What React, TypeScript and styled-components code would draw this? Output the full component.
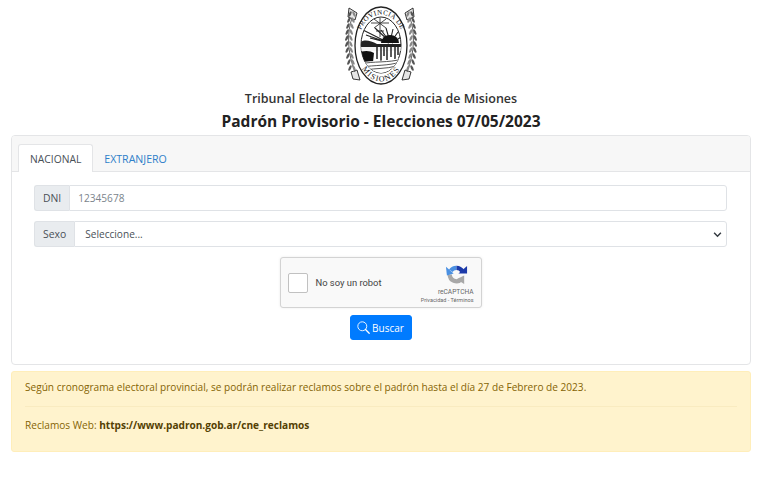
import React from 'react';
import styled, { createGlobalStyle } from 'styled-components';

const Global = createGlobalStyle`
  html, body { margin: 0; padding: 0; background: #fff; }
  body { font-family: "Open Sans", "Noto Sans", sans-serif; color: #212529; }
`;
const Page = styled.div`
  width: 740px;
  margin-left: 11px;
  display: flex;
  flex-direction: column;
  align-items: stretch;
`;
const Header = styled.header`
  display: flex;
  flex-direction: column;
  align-items: center;
  height: 135px;
`;
const Emblem = styled.svg`
  width: 76px;
  height: 90px;
  display: block;
`;
const Subtitle = styled.div`
  font-size: 12.5px;
  line-height: 17px;
  font-weight: 600;
  color: #333;
`;
const Title = styled.h1`
  font-size: 15.5px;
  line-height: 20px;
  font-weight: 700;
  color: #222;
  margin: 4px 0 0;
`;
const Card = styled.section`
  height: 230px;
  box-sizing: border-box;
  border: 1px solid #e4e5e7;
  border-radius: 4px;
  background: #fff;
  display: flex;
  flex-direction: column;
`;
const Tabs = styled.nav`
  height: 36px;
  box-sizing: border-box;
  background: #f7f7f7;
  border-bottom: 1px solid #e4e5e7;
  padding: 9px 6px 0;
  display: flex;
  align-items: flex-end;
  border-radius: 3px 3px 0 0;
`;
const Tab = styled.div<{ $active?: boolean }>`
  height: ${p => (p.$active ? '28px' : '27px')};
  box-sizing: border-box;
  padding: 0 ${p => (p.$active ? '11px' : '10px')};
  display: flex;
  align-items: center;
  font-size: ${p => (p.$active ? '10.3px' : '10.6px')};
  color: ${p => (p.$active ? '#495057' : '#2f7fc9')};
  background: ${p => (p.$active ? '#fff' : 'transparent')};
  border: 1px solid ${p => (p.$active ? '#e4e5e7' : 'transparent')};
  border-bottom: none;
  border-radius: 3px 3px 0 0;
  margin-bottom: -1px;
`;
const Body = styled.div`
  padding: 13px 23px 0 22px;
  display: flex;
  flex-direction: column;
  align-items: stretch;
`;
const Group = styled.div`
  display: flex;
  height: 26px;
  margin-bottom: 10px;
`;
const Addon = styled.div`
  box-sizing: border-box;
  padding: 0 8px;
  display: flex;
  align-items: center;
  font-size: 10.4px;
  color: #495057;
  background: #e9ecef;
  border: 1px solid #dfe2e6;
  border-right: none;
  border-radius: 3px 0 0 3px;
`;
const Field = styled.div<{ $muted?: boolean }>`
  flex: 1;
  box-sizing: border-box;
  padding: 0 8px;
  display: flex;
  align-items: center;
  justify-content: space-between;
  font-size: 10.1px;
  color: ${p => (p.$muted ? '#7b848c' : '#495057')};
  border: 1px solid #dfe2e6;
  border-radius: 0 3px 3px 0;
  background: #fff;
`;
const Select = styled(Field)`
  padding: 0 4px 0 10px;
`;
const Captcha = styled.div`
  align-self: center;
  width: 202px;
  height: 51px;
  box-sizing: border-box;
  background: #f9f9f9;
  border: 1px solid #d3d3d3;
  border-radius: 3px;
  box-shadow: 0 0 3px rgba(0, 0, 0, 0.08);
  display: flex;
  align-items: center;
  padding: 0 7px 0 7px;
`;
const Check = styled.div`
  width: 20px;
  height: 20px;
  box-sizing: border-box;
  background: #fff;
  border: 1px solid #c1c1c1;
  border-radius: 2px;
`;
const CaptchaLabel = styled.div`
  font-family: Roboto, "Liberation Sans", sans-serif;
  font-size: 9.4px;
  color: #444;
  margin-left: 8px;
  flex: 1;
`;
const Brand = styled.div`
  display: flex;
  flex-direction: column;
  align-items: center;
  font-family: Roboto, "Liberation Sans", sans-serif;
  color: #666;
  margin-top: 2px;
`;
const BrandMark = styled.svg`
  width: 23px;
  height: 23px;
  align-self: flex-end;
  margin-right: 6px;
  display: block;
`;
const BrandName = styled.div`
  font-size: 6.6px;
  line-height: 8px;
  margin-top: 2px;
  align-self: flex-end;
`;
const BrandLinks = styled.div`
  font-size: 5.5px;
  line-height: 7px;
  margin-top: 1px;
`;
const SearchButton = styled.button`
  align-self: center;
  margin-top: 7px;
  width: 62px;
  height: 25px;
  padding: 0;
  display: flex;
  align-items: center;
  justify-content: center;
  gap: 2px;
  font-family: inherit;
  font-size: 10px;
  color: #fff;
  background: #007bff;
  border: 1px solid #007bff;
  border-radius: 3px;
`;
const Alert = styled.aside`
  margin-top: 6px;
  height: 81px;
  box-sizing: border-box;
  background: #fff3cd;
  border: 1px solid #ffeeba;
  border-radius: 3px;
  padding: 8px 13px 0;
  color: #856404;
  font-size: 10.1px;
`;
const AlertLine = styled.p`
  margin: 0;
  line-height: 15px;
`;
const Rule = styled.hr`
  border: none;
  border-top: 1px solid #f9ebc0;
  margin: 11px 0 11px;
`;
const Strong = styled.b`
  color: #533f03;
  font-weight: 700;
`;

const leafRows = [14, 20, 26, 32, 38, 44, 50, 56, 62, 68];

const Wreath = () => (
  <g>
    <path d="M6 8 L14 13 L12 20 L5 17 Z" fill="#e6e6e6" stroke="#222" strokeWidth="0.9" />
    <path d="M8 72 L14 70 L17 80 L10 79 Z" fill="#e6e6e6" stroke="#222" strokeWidth="0.9" />
    <path d="M9 18 C4 32 4 52 12 72" fill="none" stroke="#333" strokeWidth="0.8" />
    {leafRows.map(y => {
      const x = 9 - 3.2 * Math.sin(((y - 14) / 54) * Math.PI);
      return (
        <g key={y}>
          <ellipse cx={x - 2} cy={y} rx="1.2" ry="3" transform={`rotate(25 ${x - 2} ${y})`} fill="#555" />
          <ellipse cx={x + 2} cy={y} rx="1.2" ry="3" transform={`rotate(-25 ${x + 2} ${y})`} fill="#888" />
        </g>
      );
    })}
  </g>
);

const Seal = () => (
  <Emblem viewBox="0 0 76 90">
    <defs>
      <path id="sealTop" d="M15 45 A23 30.500 0 0 1 61 45" />
      <path id="sealBottom" d="M13 45 A25 36.500 0 0 0 63 45" />
      <clipPath id="sealInner"><ellipse cx="38" cy="45" rx="20" ry="28" /></clipPath>
    </defs>
    <Wreath />
    <g transform="matrix(-1 0 0 1 76 0)"><Wreath /></g>
    <ellipse cx="38" cy="45.500" rx="26" ry="38.500" fill="#fff" stroke="#222" strokeWidth="1.300" />
    <ellipse cx="38" cy="45" rx="20" ry="28" fill="#fff" stroke="#222" strokeWidth="1" />
    <g clipPath="url(#sealInner)">
      <path d="M37 18v19M28 23h18M31 19l12 9M43 19L31 28M33 31h8" stroke="#333" strokeWidth="0.9" />
      <path d="M20 30L46 43M23 35L46 43M27 38L46 43M32 28L47 42M38 30L47 42M43 28L47 42M50 29L47 42M55 32L48 42M58 37L49 43" stroke="#222" strokeWidth="1.100" />
      <path d="M38 43 a9 8 0 0 1 18 0Z" fill="#111" />
      <path d="M18 42 C22 39 28 41 34 44 L60 44 V47 H18Z" fill="#222" />
      <path d="M18 47 H58 V51 H18Z" fill="#f4f4f4" />
      <path d="M17 52 C23 50 28 51 31 53 L30 62 L17 63Z" fill="#111" />
      <path d="M34 46 V59M38 46 V62M41 46 V56M44 46 V60M48 46 V57M52 46 V59M55 46 V55" stroke="#222" strokeWidth="1.500" />
      <path d="M17 63 C28 60 45 62 60 57 V75 H17Z" fill="#fff" />
      <path d="M17 64 C30 61 46 63 59 59M20 67 C30 65 46 66 57 62M23 70 C32 68 44 69 53 66" stroke="#444" strokeWidth="0.9" fill="none" />
    </g>
    <text fontFamily="'Liberation Serif', serif" fontSize="7" fill="#111" textAnchor="middle" letterSpacing="0.4">
      <textPath href="#sealTop" startOffset="50%">PROVINCIA DE</textPath>
    </text>
    <text fontFamily="'Liberation Serif', serif" fontSize="8" fill="#111" textAnchor="middle" letterSpacing="1.300">
      <textPath href="#sealBottom" startOffset="50%">MISIONES</textPath>
    </text>
  </Emblem>
);

const RecaptchaLogo = () => (
  <BrandMark viewBox="0 0 24 24" fill="none">
    <path d="M5 12 A7 7 0 0 0 17 17" stroke="#a8a8a8" strokeWidth="4.500" />
    <path d="M12 17 L20 13 L20 22 Z" fill="#a8a8a8" />
    <path d="M6 8 A7 7 0 0 1 12 5" stroke="#4a90e2" strokeWidth="4.500" />
    <path d="M1 4 L9 11 L2 13 Z" fill="#4a90e2" />
    <path d="M12 5 A7 7 0 0 1 18 8.500" stroke="#1c3aa9" strokeWidth="4.500" />
    <path d="M14 11 L23 11 L23 3 Z" fill="#1c3aa9" />
  </BrandMark>
);

const SearchIcon = () => (
  <svg width="13" height="13" viewBox="0 0 16 16" fill="none" stroke="#fff" strokeWidth="1.100">
    <circle cx="6.500" cy="6.500" r="5.500" />
    <path d="M10.500 10.500 L15 15" strokeWidth="1.600" strokeLinecap="round" />
  </svg>
);

const Chevron = () => (
  <svg width="9" height="9" viewBox="0 0 16 16" fill="none" stroke="#343a40" strokeWidth="2.600">
    <path d="M2 5l6 6 6-6" />
  </svg>
);

export default function App() {
  return (
    <Page>
      <Global />
      <Header>
        <Seal />
        <Subtitle>Tribunal Electoral de la Provincia de Misiones</Subtitle>
        <Title>Padrón Provisorio - Elecciones 07/05/2023</Title>
      </Header>
      <Card>
        <Tabs>
          <Tab $active>NACIONAL</Tab>
          <Tab>EXTRANJERO</Tab>
        </Tabs>
        <Body>
          <Group>
            <Addon>DNI</Addon>
            <Field $muted>12345678</Field>
          </Group>
          <Group>
            <Addon>Sexo</Addon>
            <Select>Seleccione...<Chevron /></Select>
          </Group>
          <Captcha>
            <Check />
            <CaptchaLabel>No soy un robot</CaptchaLabel>
            <Brand>
              <RecaptchaLogo />
              <BrandName>reCAPTCHA</BrandName>
              <BrandLinks>Privacidad - Términos</BrandLinks>
            </Brand>
          </Captcha>
          <SearchButton><SearchIcon />Buscar</SearchButton>
        </Body>
      </Card>
      <Alert>
        <AlertLine>Según cronograma electoral provincial, se podrán realizar reclamos sobre el padrón hasta el día 27 de Febrero de 2023.</AlertLine>
        <Rule />
        <AlertLine>Reclamos Web: <Strong>https://www.padron.gob.ar/cne_reclamos</Strong></AlertLine>
      </Alert>
    </Page>
  );
}
